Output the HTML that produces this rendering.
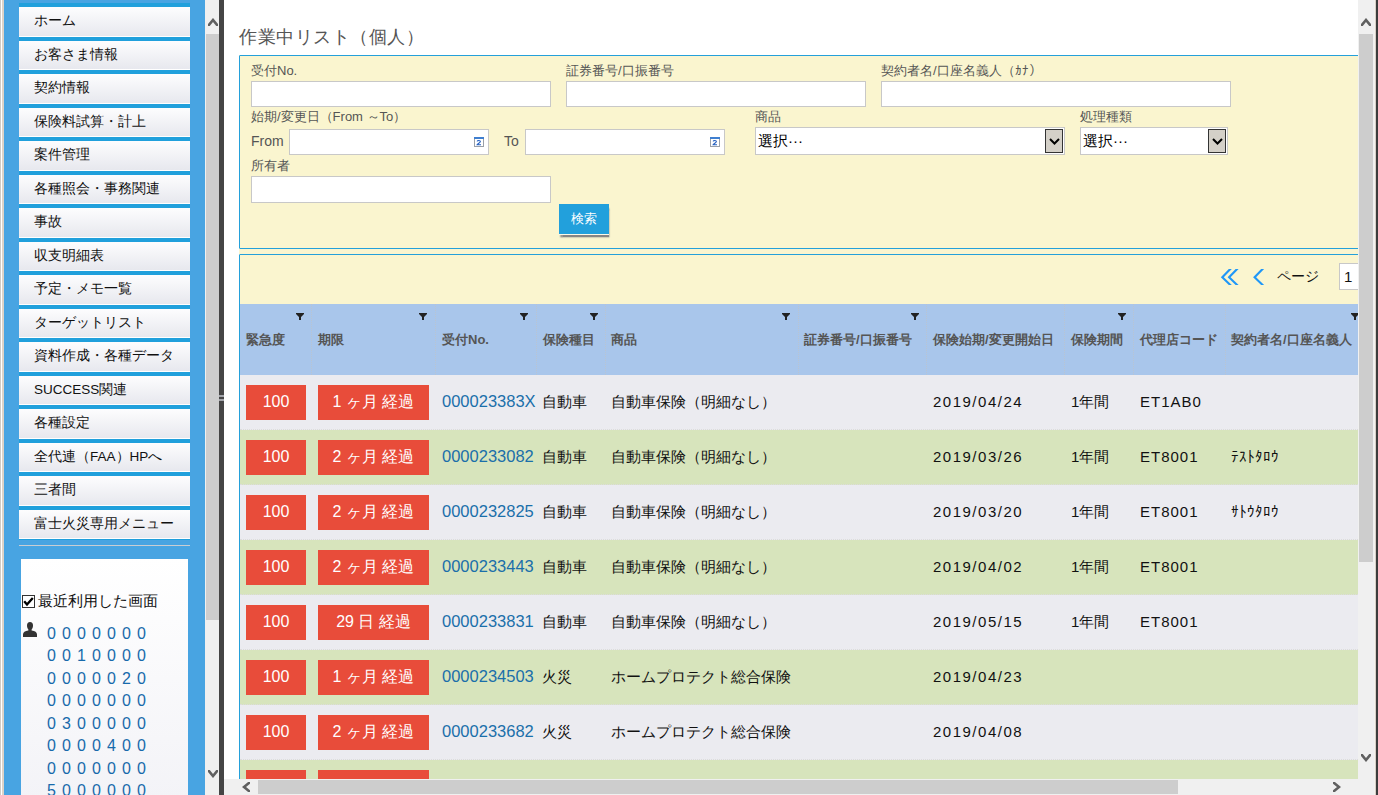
<!DOCTYPE html>
<html><head><meta charset="utf-8">
<style>
*{margin:0;padding:0;box-sizing:border-box}
html,body{width:1378px;height:795px;overflow:hidden;background:#fff;font-family:"Liberation Sans",sans-serif;position:relative}
.abs{position:absolute}
svg{display:block}
#frameL{position:absolute;left:0;top:0;width:4px;height:795px;background:linear-gradient(to right,#cfcac4 0,#cfcac4 1px,#fff 1px,#fff 2px,#dcd3c8 2px)}
#side{position:absolute;left:4px;top:0;width:201px;height:795px;background:#48a4e2;overflow:hidden}
.nb{position:absolute;left:15px;width:171px;height:33.47px;border-top:4px solid #20a0dc;background:linear-gradient(#fdfdfe,#e7e8ee);border-bottom:1px solid #fff}
.nb span{position:absolute;left:15px;top:6.2px;font-size:13.5px;color:#111;white-space:nowrap;line-height:16px}
#navend{position:absolute;left:15px;top:538.5px;width:171px;height:1.5px;background:#1f9edb}
#navline{position:absolute;left:15px;top:545px;width:171px;height:1px;background:#c9cdd3}
#recent{position:absolute;left:17px;top:559px;width:167px;height:240px;background:linear-gradient(#fff,#f3f3f7)}
.dg{position:absolute;left:47px;font-size:16px;letter-spacing:6.1px;color:#176aab;line-height:18px;white-space:nowrap}
#vsL{position:absolute;left:205px;top:0;width:14px;height:795px;background:#f0f0f0}
#vsLthumb{position:absolute;left:206px;top:34px;width:13px;height:586px;background:#cdcdcd}
#divider{position:absolute;left:219px;top:0;width:5px;height:795px;background:#454545}
.grip{position:absolute;left:219px;width:5px;height:1.5px;background:#a2a4aa}
#title{position:absolute;left:239px;top:26px;font-size:18.4px;letter-spacing:0.5px;color:#555;white-space:nowrap;line-height:22px}
#beige{position:absolute;left:239px;top:55px;width:1119px;height:724px;background:#faf5cf}
#p1{position:absolute;left:239px;top:55px;width:1130px;height:194px;border:1px solid #24a0da;border-radius:1px}
#p2{position:absolute;left:239px;top:254px;width:1130px;height:600px;border:1px solid #24a0da;border-radius:1px}
.lb{position:absolute;font-size:13px;color:#555;white-space:nowrap;line-height:14px}
.in{position:absolute;background:#fff;border:1px solid #c8c8c8}
.sel{position:absolute;background:#fff;border:1px solid #c8c8c8}
.sel span{position:absolute;left:2px;top:4px;font-size:15px;color:#000;line-height:18px;white-space:nowrap}
.sel i{position:absolute;right:1px;top:1px;width:18px;height:24px;background:#d4d0c8;border:1px solid #333}
.sel i svg{position:absolute;left:3px;top:8px}
#btn{position:absolute;left:559px;top:204px;width:50px;height:30px;background:#22a0dc;box-shadow:0 1px 0 #fcf9e6,0.5px 3.5px 1.5px #858585;color:#fff;font-size:12.5px;text-align:center;line-height:30px}
#hdr{position:absolute;left:240px;top:304px;width:1118px;height:71px;background:#a9c6eb}
.hsep{position:absolute;top:304px;width:0;height:71px;border-left:1px dotted #b9c4d2}
.ht{position:absolute;top:332px;font-size:13px;font-weight:bold;color:#555;white-space:nowrap;line-height:16px}
.fi{position:absolute;top:313px}
.row{position:absolute;left:240px;width:1118px;height:55px;border-bottom:1px dotted #dcdcdc}
.r0{background:#ebebf0}
.r1{background:#d7e4bc}
.bd{position:absolute;top:10px;height:35px;background:#e84c3a;color:#fff;font-size:16px;text-align:center;line-height:34px;white-space:nowrap}
.b1{left:6px;width:60px}
.b2{left:78px;width:111px}
.ct{position:absolute;top:17px;font-size:15px;color:#111;line-height:20px;white-space:nowrap;margin-left:-240px}
.lk{color:#1a6faa;font-size:16.5px;margin-top:-1px}
.dt{letter-spacing:1.5px}
.cd{letter-spacing:1px}
.cj{font-size:15px}
.kn{font-size:15px;margin-top:-0.5px}
#vsR{position:absolute;left:1358px;top:0;width:16px;height:795px;background:#f0f0f0}
#vsRthumb{position:absolute;left:1359px;top:34px;width:14px;height:528px;background:#cdcdcd}
#hs{position:absolute;left:224px;top:779px;width:1134px;height:16px;background:#f0f0f0}
#hsthumb{position:absolute;left:258px;top:780px;width:920px;height:14px;background:#cdcdcd}
#frameR{position:absolute;left:1374px;top:0;width:4px;height:795px;background:linear-gradient(to right,#f5f2ee 0,#f5f2ee 1px,#d6d0c8 1px,#d6d0c8 2px,#3c3c3c 2px)}
</style></head><body>
<div id="frameL"></div>
<div id="side">
<div class="nb" style="top:3.20px"><span>ホーム</span></div>
<div class="nb" style="top:36.70px"><span>お客さま情報</span></div>
<div class="nb" style="top:70.20px"><span>契約情報</span></div>
<div class="nb" style="top:103.70px"><span>保険料試算・計上</span></div>
<div class="nb" style="top:137.20px"><span>案件管理</span></div>
<div class="nb" style="top:170.70px"><span>各種照会・事務関連</span></div>
<div class="nb" style="top:204.20px"><span>事故</span></div>
<div class="nb" style="top:237.70px"><span>収支明細表</span></div>
<div class="nb" style="top:271.20px"><span>予定・メモ一覧</span></div>
<div class="nb" style="top:304.70px"><span>ターゲットリスト</span></div>
<div class="nb" style="top:338.20px"><span>資料作成・各種データ</span></div>
<div class="nb" style="top:371.70px"><span>SUCCESS関連</span></div>
<div class="nb" style="top:405.20px"><span>各種設定</span></div>
<div class="nb" style="top:438.70px"><span>全代連（FAA）HPへ</span></div>
<div class="nb" style="top:472.20px"><span>三者間</span></div>
<div class="nb" style="top:505.70px"><span>富士火災専用メニュー</span></div>

<div id="navend"></div>
<div id="navline"></div>
<div id="recent">
 <svg class="abs" style="left:1px;top:36px" width="13" height="13" viewBox="0 0 13 13"><rect x="0.5" y="0.5" width="12" height="12" fill="#fff" stroke="#333"/><path d="M2.2 6.3L5 9.6L10.8 3" fill="none" stroke="#000" stroke-width="2.3"/></svg>
 <div class="abs" style="left:17px;top:33px;font-size:15px;color:#111;white-space:nowrap;line-height:18px">最近利用した画面</div>
 <svg class="abs" style="left:2px;top:63px" width="14" height="15" viewBox="0 0 14 15"><path d="M7 0C5 0 4 1.5 4 3.5C4 5.5 4.8 7 5.5 7.8L5.3 8.6C2 9.2 0 10.2 0 12.5V15H14V12.5C14 10.2 12 9.2 8.7 8.6L8.5 7.8C9.2 7 10 5.5 10 3.5C10 1.5 9 0 7 0Z" fill="#333"/></svg>
</div>
</div>
<div class="dg" style="top:625.00px">0000000</div>
<div class="dg" style="top:647.45px">0010000</div>
<div class="dg" style="top:669.90px">0000020</div>
<div class="dg" style="top:692.35px">0000000</div>
<div class="dg" style="top:714.80px">0300000</div>
<div class="dg" style="top:737.25px">0000400</div>
<div class="dg" style="top:759.70px">0000000</div>
<div class="dg" style="top:782.15px">5000000</div>

<div id="vsL"></div>
<div id="vsLthumb"></div>
<div id="divider"></div>
<div class="grip" style="top:395px"></div><div class="grip" style="top:399px"></div>

<div id="title">作業中リスト（個人）</div>
<div id="beige"></div>
<div id="p1"></div>
<div id="p2"></div>
<div class="lb" style="left:251px;top:64px">受付No.</div>
<div class="lb" style="left:566px;top:64px">証券番号/口振番号</div>
<div class="lb" style="left:881px;top:64px">契約者名/口座名義人（ｶﾅ）</div>
<div class="in" style="left:251px;top:81px;width:300px;height:26px"></div>
<div class="in" style="left:566px;top:81px;width:300px;height:26px"></div>
<div class="in" style="left:881px;top:81px;width:350px;height:26px"></div>
<div class="lb" style="left:251px;top:110px">始期/変更日（From ～To）</div>
<div class="lb" style="left:755px;top:110px">商品</div>
<div class="lb" style="left:1080px;top:110px">処理種類</div>
<div class="lb" style="left:251px;top:134px;font-size:14px">From</div>
<div class="in" style="left:289px;top:129px;width:200px;height:26px"></div>
<div class="lb" style="left:504px;top:134px;font-size:14px">To</div>
<div class="in" style="left:525px;top:129px;width:200px;height:26px"></div>
<svg class="abs" style="left:474px;top:137px" width="10" height="10" viewBox="0 0 10 10"><rect x="0.5" y="0.5" width="9" height="9" fill="#fff" stroke="#9aa0a8"/><rect x="0" y="0" width="10" height="2" fill="#3f7fd0"/><path d="M3.1 4.4C3.4 3.2 6.4 3.1 6.4 4.6C6.4 5.7 3.6 6.5 3.1 7.7H7" fill="none" stroke="#2560c0" stroke-width="1.1"/></svg>
<svg class="abs" style="left:710px;top:137px" width="10" height="10" viewBox="0 0 10 10"><rect x="0.5" y="0.5" width="9" height="9" fill="#fff" stroke="#9aa0a8"/><rect x="0" y="0" width="10" height="2" fill="#3f7fd0"/><path d="M3.1 4.4C3.4 3.2 6.4 3.1 6.4 4.6C6.4 5.7 3.6 6.5 3.1 7.7H7" fill="none" stroke="#2560c0" stroke-width="1.1"/></svg>
<div class="sel" style="left:755px;top:127px;width:310px;height:28px"><span>選択···</span><i><svg width="11" height="7" viewBox="0 0 11 7"><path d="M1 1L5.5 5.5L10 1" fill="none" stroke="#000" stroke-width="2"/></svg></i></div>
<div class="sel" style="left:1080px;top:127px;width:148px;height:28px"><span>選択···</span><i><svg width="11" height="7" viewBox="0 0 11 7"><path d="M1 1L5.5 5.5L10 1" fill="none" stroke="#000" stroke-width="2"/></svg></i></div>
<div class="lb" style="left:251px;top:159px">所有者</div>
<div class="in" style="left:251px;top:176px;width:300px;height:27px"></div>
<div id="btn">検索</div>

<svg class="abs" style="left:1219px;top:268px" width="22" height="18" viewBox="0 0 22 18"><path d="M9.8 1H12.8L4.8 9.2L12.8 17H9.8L1.8 9.2Z M16.6 1H19.6L11.6 9.2L19.6 17H16.6L8.6 9.2Z" fill="#1f97f7"/></svg>
<svg class="abs" style="left:1252px;top:268px" width="14" height="18" viewBox="0 0 14 18"><path d="M9.1 1H12.1L4.1 9.2L12.1 17H9.1L1.1 9.2Z" fill="#1f97f7"/></svg>
<div class="abs" style="left:1277px;top:268px;font-size:14px;color:#111;white-space:nowrap;line-height:17px">ページ</div>
<div class="in" style="left:1339px;top:263px;width:30px;height:27px"><span style="position:absolute;left:4px;top:4px;font-size:15px;color:#111;line-height:18px">1</span></div>

<div id="hdr"></div>
<div class="hsep" style="left:311.0px"></div><div class="hsep" style="left:434.6px"></div><div class="hsep" style="left:535.7px"></div><div class="hsep" style="left:605.0px"></div><div class="hsep" style="left:797.7px"></div><div class="hsep" style="left:926.3px"></div><div class="hsep" style="left:1064.2px"></div><div class="hsep" style="left:1133.1px"></div><div class="hsep" style="left:1224.5px"></div><div class="ht" style="left:246px">緊急度</div><div class="ht" style="left:318px">期限</div><div class="ht" style="left:442px">受付No.</div><div class="ht" style="left:543px">保険種目</div><div class="ht" style="left:611px">商品</div><div class="ht" style="left:804px">証券番号/口振番号</div><div class="ht" style="left:933px">保険始期/変更開始日</div><div class="ht" style="left:1071px">保険期間</div><div class="ht" style="left:1140px">代理店コード</div><div class="ht" style="left:1231px">契約者名/口座名義人</div><svg class="fi" style="left:296px" width="8" height="8" viewBox="0 0 8 8"><path d="M0 0H8V1L5 4V7H3V4L0 1Z" fill="#222"/></svg><svg class="fi" style="left:419px" width="8" height="8" viewBox="0 0 8 8"><path d="M0 0H8V1L5 4V7H3V4L0 1Z" fill="#222"/></svg><svg class="fi" style="left:520px" width="8" height="8" viewBox="0 0 8 8"><path d="M0 0H8V1L5 4V7H3V4L0 1Z" fill="#222"/></svg><svg class="fi" style="left:590px" width="8" height="8" viewBox="0 0 8 8"><path d="M0 0H8V1L5 4V7H3V4L0 1Z" fill="#222"/></svg><svg class="fi" style="left:782px" width="8" height="8" viewBox="0 0 8 8"><path d="M0 0H8V1L5 4V7H3V4L0 1Z" fill="#222"/></svg><svg class="fi" style="left:911px" width="8" height="8" viewBox="0 0 8 8"><path d="M0 0H8V1L5 4V7H3V4L0 1Z" fill="#222"/></svg><svg class="fi" style="left:1118px" width="8" height="8" viewBox="0 0 8 8"><path d="M0 0H8V1L5 4V7H3V4L0 1Z" fill="#222"/></svg><svg class="fi" style="left:1351px" width="8" height="8" viewBox="0 0 8 8"><path d="M0 0H8V1L5 4V7H3V4L0 1Z" fill="#222"/></svg>
<div class="row r0" style="top:375px"><div class="bd b1">100</div><div class="bd b2">1&nbsp;ヶ月&nbsp;経過</div><div class="ct lk" style="left:442px">000023383X</div><div class="ct cj" style="left:542px">自動車</div><div class="ct cj" style="left:611px">自動車保険（明細なし）</div><div class="ct dt" style="left:933px">2019/04/24</div><div class="ct" style="left:1071px">1年間</div><div class="ct cd" style="left:1140px">ET1AB0</div></div>
<div class="row r1" style="top:430px"><div class="bd b1">100</div><div class="bd b2">2&nbsp;ヶ月&nbsp;経過</div><div class="ct lk" style="left:442px">0000233082</div><div class="ct cj" style="left:542px">自動車</div><div class="ct cj" style="left:611px">自動車保険（明細なし）</div><div class="ct dt" style="left:933px">2019/03/26</div><div class="ct" style="left:1071px">1年間</div><div class="ct cd" style="left:1140px">ET8001</div><div class="ct kn" style="left:1231px">ﾃｽﾄﾀﾛｳ</div></div>
<div class="row r0" style="top:485px"><div class="bd b1">100</div><div class="bd b2">2&nbsp;ヶ月&nbsp;経過</div><div class="ct lk" style="left:442px">0000232825</div><div class="ct cj" style="left:542px">自動車</div><div class="ct cj" style="left:611px">自動車保険（明細なし）</div><div class="ct dt" style="left:933px">2019/03/20</div><div class="ct" style="left:1071px">1年間</div><div class="ct cd" style="left:1140px">ET8001</div><div class="ct kn" style="left:1231px">ｻﾄｳﾀﾛｳ</div></div>
<div class="row r1" style="top:540px"><div class="bd b1">100</div><div class="bd b2">2&nbsp;ヶ月&nbsp;経過</div><div class="ct lk" style="left:442px">0000233443</div><div class="ct cj" style="left:542px">自動車</div><div class="ct cj" style="left:611px">自動車保険（明細なし）</div><div class="ct dt" style="left:933px">2019/04/02</div><div class="ct" style="left:1071px">1年間</div><div class="ct cd" style="left:1140px">ET8001</div></div>
<div class="row r0" style="top:595px"><div class="bd b1">100</div><div class="bd b2">29&nbsp;日&nbsp;経過</div><div class="ct lk" style="left:442px">0000233831</div><div class="ct cj" style="left:542px">自動車</div><div class="ct cj" style="left:611px">自動車保険（明細なし）</div><div class="ct dt" style="left:933px">2019/05/15</div><div class="ct" style="left:1071px">1年間</div><div class="ct cd" style="left:1140px">ET8001</div></div>
<div class="row r1" style="top:650px"><div class="bd b1">100</div><div class="bd b2">1&nbsp;ヶ月&nbsp;経過</div><div class="ct lk" style="left:442px">0000234503</div><div class="ct cj" style="left:542px">火災</div><div class="ct cj" style="left:611px">ホームプロテクト総合保険</div><div class="ct dt" style="left:933px">2019/04/23</div></div>
<div class="row r0" style="top:705px"><div class="bd b1">100</div><div class="bd b2">2&nbsp;ヶ月&nbsp;経過</div><div class="ct lk" style="left:442px">0000233682</div><div class="ct cj" style="left:542px">火災</div><div class="ct cj" style="left:611px">ホームプロテクト総合保険</div><div class="ct dt" style="left:933px">2019/04/08</div></div>
<div class="row r1" style="top:760px"><div class="bd b1"></div><div class="bd b2"></div></div>

<div id="vsR"></div>
<div id="vsRthumb"></div>
<div id="hs"></div>
<div id="hsthumb"></div>
<svg class="abs" style="left:208px;top:18px" width="10" height="8" viewBox="0 0 10 8"><path d="M-0.3 8.5L5 2L10.3 8.5" fill="none" stroke="#606060" stroke-width="2.6"/></svg>
<svg class="abs" style="left:208px;top:770px" width="10" height="8" viewBox="0 0 10 8"><path d="M-0.3 -0.5L5 6L10.3 -0.5" fill="none" stroke="#606060" stroke-width="2.6"/></svg>
<svg class="abs" style="left:1361px;top:18px" width="10" height="8" viewBox="0 0 10 8"><path d="M-0.3 8.5L5 2L10.3 8.5" fill="none" stroke="#606060" stroke-width="2.6"/></svg>
<svg class="abs" style="left:1361px;top:754px" width="10" height="8" viewBox="0 0 10 8"><path d="M-0.3 -0.5L5 6L10.3 -0.5" fill="none" stroke="#606060" stroke-width="2.6"/></svg>
<svg class="abs" style="left:241.5px;top:782px" width="8" height="10" viewBox="0 0 8 10"><path d="M8.5 -0.3L2 5L8.5 10.3" fill="none" stroke="#606060" stroke-width="2.6"/></svg>
<svg class="abs" style="left:1332.5px;top:782px" width="8" height="10" viewBox="0 0 8 10"><path d="M-0.5 -0.3L6 5L-0.5 10.3" fill="none" stroke="#606060" stroke-width="2.6"/></svg>
<div id="frameR"></div>
</body></html>
